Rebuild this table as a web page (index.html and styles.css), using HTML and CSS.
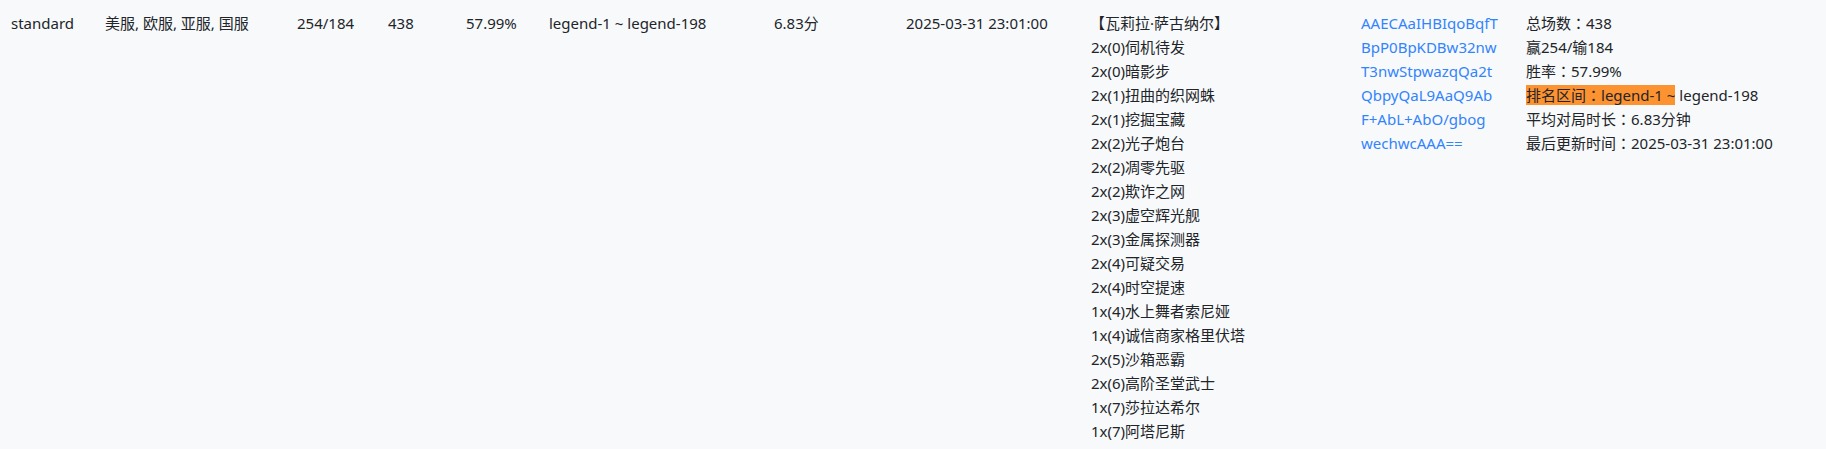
FILE: index.html
```html
<!DOCTYPE html>
<html lang="zh-CN">
<head>
<meta charset="utf-8">
<title>Deck stats</title>
<link rel="stylesheet" href="styles.css">
</head>
<body>
<div class="row">
  <div class="cell">standard</div>
  <div class="cell">美服, 欧服, 亚服, 国服</div>
  <div class="cell">254/184</div>
  <div class="cell">438</div>
  <div class="cell">57.99%</div>
  <div class="cell">legend-1 ~ legend-198</div>
  <div class="cell">6.83分</div>
  <div class="cell">2025-03-31 23:01:00</div>
  <div class="cell c-deck">
    <div class="hero">【瓦莉拉·萨古纳尔】</div>
    <div>2x(0)伺机待发</div>
    <div>2x(0)暗影步</div>
    <div>2x(1)扭曲的织网蛛</div>
    <div>2x(1)挖掘宝藏</div>
    <div>2x(2)光子炮台</div>
    <div>2x(2)凋零先驱</div>
    <div>2x(2)欺诈之网</div>
    <div>2x(3)虚空辉光舰</div>
    <div>2x(3)金属探测器</div>
    <div>2x(4)可疑交易</div>
    <div>2x(4)时空提速</div>
    <div>1x(4)水上舞者索尼娅</div>
    <div>1x(4)诚信商家格里伏塔</div>
    <div>2x(5)沙箱恶霸</div>
    <div>2x(6)高阶圣堂武士</div>
    <div>1x(7)莎拉达希尔</div>
    <div>1x(7)阿塔尼斯</div>
  </div>
  <div class="cell">
    <a class="code" href="#"><span>AAECAaIHBIqoBqfT</span><span>BpP0BpKDBw32nw</span><span>T3nwStpwazqQa2t</span><span>QbpyQaL9AaQ9Ab</span><span>F+AbL+AbO/gbog</span><span>wechwcAAA==</span></a>
  </div>
  <div class="cell">
    <div>总场数<span class="colon" lang="zh-TW">：</span>438</div>
    <div>赢254/输184</div>
    <div>胜率<span class="colon" lang="zh-TW">：</span>57.99%</div>
    <div><mark class="hl">排名区间<span class="colon" lang="zh-TW">：</span>legend-1 ~</mark> legend-198</div>
    <div>平均对局时长<span class="colon" lang="zh-TW">：</span>6.83分钟</div>
    <div>最后更新时间<span class="colon" lang="zh-TW">：</span>2025-03-31 23:01:00</div>
  </div>
</div>
</body>
</html>
```

FILE: styles.css
```css
html, body {
  margin: 0;
  padding: 0;
  background: #f8f9fb;
}
body {
  font-family: "Noto Sans", "Noto Sans CJK SC", sans-serif;
  font-size: 15px;
  line-height: 24px;
  color: #212529;
}
.row {
  display: grid;
  grid-template-columns: 94px 192px 91px 78px 83px 225px 132px 185px 270px 165px auto;
  padding: 11px 0 0 11px;
  height: 438px;
}
.cell {
  white-space: nowrap;
}
.hero {
  margin-left: -1px;
}
.code {
  color: #3184fb;
  text-decoration: none;
  display: flex;
  flex-direction: column;
}
.colon {
  font-family: "Noto Sans CJK TC", "Noto Sans CJK SC", sans-serif;
}
.hl {
  background: #fd9231;
  color: #212529;
  padding: 0;
}
```
